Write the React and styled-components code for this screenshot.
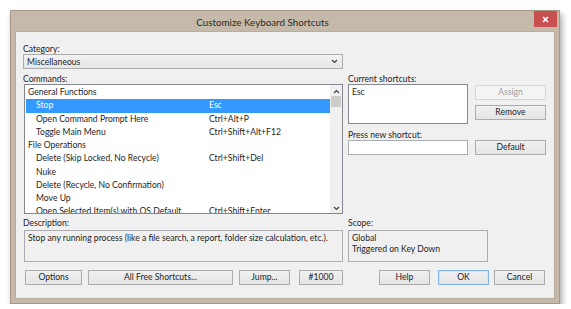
import styled, { createGlobalStyle } from "styled-components";

const GlobalStyle = createGlobalStyle`
  html, body {
    margin: 0;
    background: #ffffff;
  }
  body {
    font-family: Lato, "Noto Sans", sans-serif;
    font-size: 8.6px;
    color: #1e1e1e;
  }
`;

const Page = styled.div`
  padding: 10px 0 0 10px;
`;

const Window = styled.div`
  width: 550px;
  box-sizing: border-box;
  background: #c5b9a9;
  border: 1px solid #a5998a;
  padding: 0 4px 4px 4px;
  box-shadow: 2px 4px 6px rgba(0, 0, 0, 0.35);
`;

const TitleBar = styled.div`
  height: 20px;
  display: flex;
  align-items: flex-start;
`;

const Title = styled.div`
  flex: 1;
  text-align: center;
  padding-right: 24px;
  font-size: 9.8px;
  line-height: 23px;
  color: #2b2b2b;
`;

const CloseButton = styled.div`
  width: 23px;
  height: 16px;
  margin: 0 -2px 0 0;
  background: #c75050;
  display: flex;
  align-items: center;
  justify-content: center;
`;

const Client = styled.div`
  background: #f0f0f0;
  border: 1px solid #b9ad9d;
  height: 257px;
  padding: 9px 9px 0 7px;
  box-sizing: content-box;
  display: flex;
  flex-direction: column;
`;

const Label = styled.div`
  height: 13px;
  line-height: ${(p) => (p.$low ? 17 : 13)}px;
  margin-top: ${(p) => p.$mt || 0}px;
`;

const Combo = styled.div`
  width: 320px;
  height: 15px;
  box-sizing: border-box;
  border: 1px solid #acacac;
  background: linear-gradient(#f2f2f2, #e6e6e6);
  display: flex;
  align-items: center;
  justify-content: space-between;
  padding: 0 4px 0 3px;
`;

const Columns = styled.div`
  display: grid;
  grid-template-columns: 320px 1fr;
  column-gap: 5px;
  margin-top: ${(p) => p.$mt}px;
`;

const List = styled.div`
  height: 130px;
  box-sizing: border-box;
  border: 1px solid #828790;
  background: #ffffff;
  display: flex;
  margin-left: 1px;
`;

const Rows = styled.div`
  flex: 1;
  overflow: hidden;
  padding-top: 1px;
`;

const Row = styled.div`
  height: 13.25px;
  line-height: 13.25px;
  display: grid;
  grid-template-columns: ${(p) => (p.$group ? "auto" : "173px 1fr")};
  padding-left: ${(p) => (p.$group ? 2 : 10)}px;
  margin-left: 1px;
  white-space: nowrap;
  background: ${(p) => (p.$selected ? "#3399ff" : "transparent")};
  color: ${(p) => (p.$selected ? "#ffffff" : "inherit")};
`;

const ScrollBar = styled.div`
  width: 12px;
  background: #f0f0f0;
  display: flex;
  flex-direction: column;
  align-items: center;
  justify-content: space-between;
  padding: 4px 0 2px;
`;

const ScrollTrack = styled.div`
  flex: 1;
  width: 100%;
  padding-top: 2px;
`;

const Thumb = styled.div`
  height: 11px;
  margin: 0 1px;
  background: #cdcdcd;
`;

const RightPane = styled.div`
  display: flex;
  flex-direction: column;
`;

const FieldRow = styled.div`
  display: flex;
  gap: 7px;
  align-items: flex-start;
`;

const Box = styled.div`
  width: ${(p) => p.$w}px;
  height: ${(p) => p.$h}px;
  box-sizing: border-box;
  margin-left: ${(p) => p.$ml || 0}px;
  border: 1px solid ${(p) => (p.$dark ? "#828790" : "#abadb3")};
  background: ${(p) => (p.$white ? "#ffffff" : "transparent")};
  padding: 2px 3px;
  line-height: 11px;
  white-space: nowrap;
`;

const ButtonStack = styled.div`
  display: flex;
  flex-direction: column;
  gap: 5px;
  padding-top: 1px;
`;

const Button = styled.div`
  width: ${(p) => p.$w}px;
  height: 15px;
  box-sizing: border-box;
  margin-left: ${(p) => p.$ml || 0}px;
  border: 1px solid ${(p) => (p.$default ? "#7eb4ea" : p.$disabled ? "#d5d5d5" : "#acacac")};
  box-shadow: ${(p) => (p.$default ? "inset 0 0 0 1px #cde4fb" : "none")};
  background: ${(p) =>
    p.$disabled ? "#f4f4f4" : "linear-gradient(#f0f0f0, #e5e5e5)"};
  color: ${(p) => (p.$disabled ? "#a0a0a0" : "#1e1e1e")};
  display: flex;
  align-items: center;
  justify-content: center;
  line-height: 13px;
`;

const Footer = styled.div`
  margin-top: 8px;
  display: flex;
  justify-content: space-between;
  padding-left: 2px;
`;

const ButtonGroup = styled.div`
  display: flex;
  gap: ${(p) => p.$gap}px;
`;

function Chevron({ up }) {
  return (
    <svg width="7" height="5" viewBox="0 0 7 5">
      <polyline
        points={up ? "1,4 3.5,1.5 6,4" : "1,1 3.5,3.5 6,1"}
        fill="none"
        stroke="#404040"
        strokeWidth="1.2"
      />
    </svg>
  );
}

const commands = [
  { name: "General Functions", group: true },
  { name: "Stop", key: "Esc", selected: true },
  { name: "Open Command Prompt Here", key: "Ctrl+Alt+P" },
  { name: "Toggle Main Menu", key: "Ctrl+Shift+Alt+F12" },
  { name: "File Operations", group: true },
  { name: "Delete (Skip Locked, No Recycle)", key: "Ctrl+Shift+Del" },
  { name: "Nuke" },
  { name: "Delete (Recycle, No Confirmation)" },
  { name: "Move Up" },
  { name: "Open Selected Item(s) with OS Default", key: "Ctrl+Shift+Enter" },
];

export default function App() {
  return (
    <>
      <GlobalStyle />
      <Page>
        <Window>
          <TitleBar>
            <Title>Customize Keyboard Shortcuts</Title>
            <CloseButton>
              <svg width="7" height="7" viewBox="0 0 7 7">
                <path d="M1 1L6 6M6 1L1 6" stroke="#ffffff" strokeWidth="1.6" />
              </svg>
            </CloseButton>
          </TitleBar>
          <Client>
            <Label $low>Category:</Label>
            <Combo>
              <span>Miscellaneous</span>
              <Chevron />
            </Combo>
            <Columns $mt={2}>
              <div>
                <Label $low>Commands:</Label>
                <List>
                  <Rows>
                    {commands.map((c) => (
                      <Row key={c.name} $group={c.group} $selected={c.selected}>
                        <span>{c.name}</span>
                        {!c.group && <span>{c.key || ""}</span>}
                      </Row>
                    ))}
                  </Rows>
                  <ScrollBar>
                    <Chevron up />
                    <ScrollTrack>
                      <Thumb />
                    </ScrollTrack>
                    <Chevron />
                  </ScrollBar>
                </List>
              </div>
              <RightPane>
                <Label $low>Current shortcuts:</Label>
                <FieldRow>
                  <Box $w={120} $h={40} $white $dark>
                    Esc
                  </Box>
                  <ButtonStack>
                    <Button $w={71} $disabled>
                      Assign
                    </Button>
                    <Button $w={71}>Remove</Button>
                  </ButtonStack>
                </FieldRow>
                <Label $low $mt={3}>
                  Press new shortcut:
                </Label>
                <FieldRow>
                  <Box $w={120} $h={15} $white />
                  <Button $w={71}>Default</Button>
                </FieldRow>
              </RightPane>
            </Columns>
            <Columns $mt={3}>
              <div>
                <Label>Description:</Label>
                <Box $w={319} $h={32} $ml={1}>
                  Stop any running process (like a file search, a report, folder size calculation, etc.).
                </Box>
              </div>
              <div>
                <Label>Scope:</Label>
                <Box $w={140} $h={32}>
                  Global
                  <br />
                  Triggered on Key Down
                </Box>
              </div>
            </Columns>
            <Footer>
              <ButtonGroup $gap={6}>
                <Button $w={57}>Options</Button>
                <Button $w={145}>All Free Shortcuts...</Button>
                <Button $w={51}>Jump...</Button>
                <Button $w={44} $ml={3}>
                  #1000
                </Button>
              </ButtonGroup>
              <ButtonGroup $gap={5}>
                <Button $w={51}>Help</Button>
                <Button $w={51} $ml={3} $default>
                  OK
                </Button>
                <Button $w={51}>Cancel</Button>
              </ButtonGroup>
            </Footer>
          </Client>
        </Window>
      </Page>
    </>
  );
}
